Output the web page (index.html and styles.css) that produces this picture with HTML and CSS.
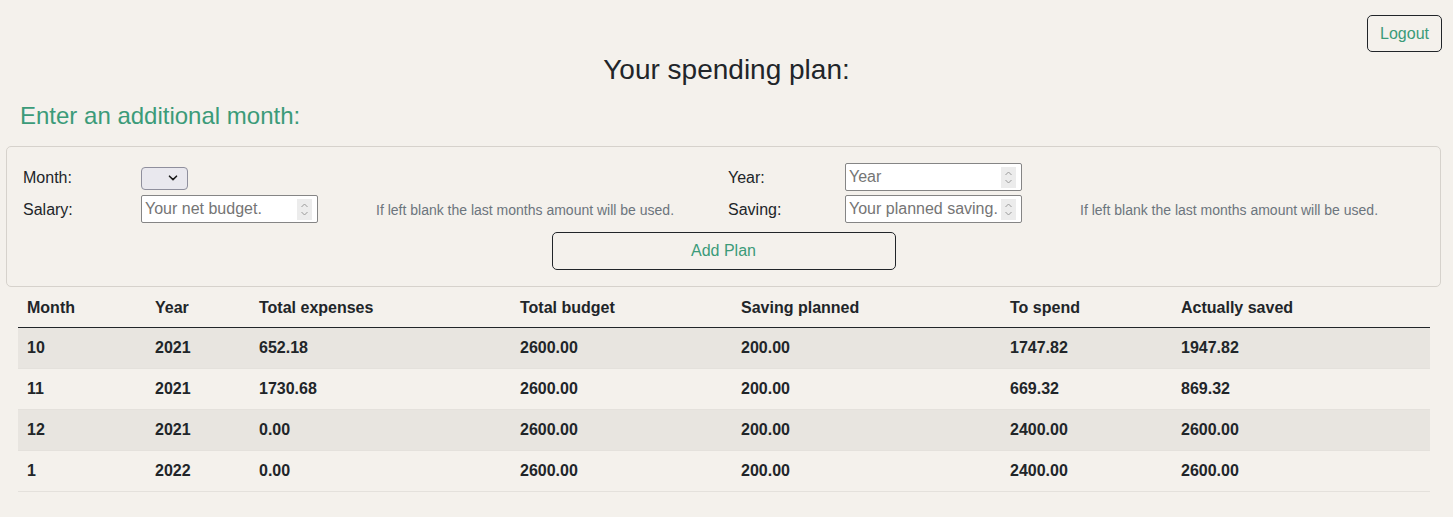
FILE: index.html
```html
<!DOCTYPE html>
<html lang="en">
<head>
<meta charset="utf-8">
<title>Spending plan</title>
<link rel="stylesheet" href="styles.css">
</head>
<body>
<div class="topbar">
  <button class="btn btn-logout">Logout</button>
</div>
<h1 class="page-title">Your spending plan:</h1>
<h2 class="section-title">Enter an additional month:</h2>
<form class="plan-form">
  <div class="form-grid">
    <label class="lbl">Month:</label>
    <div class="cell"><div class="select-box"><select class="sel"></select><svg width="10" height="6" viewBox="0 0 10 6"><path d="M1.5 1.2 L5 4.6 L8.5 1.2" fill="none" stroke="#1a1a1a" stroke-width="1.6" stroke-linecap="round" stroke-linejoin="round"/></svg></div></div>
    <div></div>
    <label class="lbl">Year:</label>
    <div class="cell"><div class="num"><input class="num-in" type="text" placeholder="Year"><svg class="spin" width="15" height="21" viewBox="0 0 15 21"><rect width="15" height="21" fill="#ececec"/><path d="M4.5 8 L7.5 5 L10.5 8" fill="none" stroke="#9a9a9a" stroke-width="1"/><path d="M4.5 13 L7.5 16 L10.5 13" fill="none" stroke="#9a9a9a" stroke-width="1"/></svg></div></div>
    <div></div>

    <label class="lbl">Salary:</label>
    <div class="cell"><div class="num"><input class="num-in" type="text" placeholder="Your net budget."><svg class="spin" width="15" height="21" viewBox="0 0 15 21"><rect width="15" height="21" fill="#ececec"/><path d="M4.5 8 L7.5 5 L10.5 8" fill="none" stroke="#9a9a9a" stroke-width="1"/><path d="M4.5 13 L7.5 16 L10.5 13" fill="none" stroke="#9a9a9a" stroke-width="1"/></svg></div></div>
    <div class="hint">If left blank the last months amount will be used.</div>
    <label class="lbl">Saving:</label>
    <div class="cell"><div class="num"><input class="num-in" type="text" placeholder="Your planned saving."><svg class="spin" width="15" height="21" viewBox="0 0 15 21"><rect width="15" height="21" fill="#ececec"/><path d="M4.5 8 L7.5 5 L10.5 8" fill="none" stroke="#9a9a9a" stroke-width="1"/><path d="M4.5 13 L7.5 16 L10.5 13" fill="none" stroke="#9a9a9a" stroke-width="1"/></svg></div></div>
    <div class="hint">If left blank the last months amount will be used.</div>
  </div>
  <div class="btn-row">
    <button type="button" class="btn btn-add">Add Plan</button>
  </div>
</form>
<table class="plan-table">
  <colgroup>
    <col class="c1"><col class="c2"><col class="c3"><col class="c4"><col class="c5"><col class="c6"><col class="c7">
  </colgroup>
  <thead>
    <tr><th>Month</th><th>Year</th><th>Total expenses</th><th>Total budget</th><th>Saving planned</th><th>To spend</th><th>Actually saved</th></tr>
  </thead>
  <tbody>
    <tr><td>10</td><td>2021</td><td>652.18</td><td>2600.00</td><td>200.00</td><td>1747.82</td><td>1947.82</td></tr>
    <tr><td>11</td><td>2021</td><td>1730.68</td><td>2600.00</td><td>200.00</td><td>669.32</td><td>869.32</td></tr>
    <tr><td>12</td><td>2021</td><td>0.00</td><td>2600.00</td><td>200.00</td><td>2400.00</td><td>2600.00</td></tr>
    <tr><td>1</td><td>2022</td><td>0.00</td><td>2600.00</td><td>200.00</td><td>2400.00</td><td>2600.00</td></tr>
  </tbody>
</table>
</body>
</html>
```

FILE: styles.css
```css
* { box-sizing: border-box; }
html, body { margin: 0; padding: 0; }
body {
  background: #f4f1ec;
  font-family: "Liberation Sans", Arial, sans-serif;
  font-size: 16px;
  line-height: 1.5;
  color: #212529;
  width: 1453px;
  min-height: 517px;
}
.topbar {
  display: flex;
  justify-content: flex-end;
  padding: 15px 11px 0 0;
}
.btn {
  font-family: "Liberation Sans", Arial, sans-serif;
  font-size: 16px;
  line-height: 24px;
  color: #3b9b79;
  background: transparent;
  border: 1px solid #212529;
  border-radius: 5px;
  cursor: pointer;
}
.btn-logout {
  height: 37px;
  padding: 5px 12px;
}
.page-title {
  margin: 1px 0 0 0;
  font-size: 28px;
  font-weight: 400;
  line-height: 34px;
  text-align: center;
  color: #212529;
}
.section-title {
  margin: 14px 0 0 20px;
  font-size: 24px;
  font-weight: 400;
  line-height: 29px;
  color: #3b9b79;
}
.plan-form {
  margin: 16px 12px 0 6px;
  border: 1px solid #d6d2cc;
  border-radius: 5px;
  padding: 16px 16px 16px 16px;
}
.form-grid {
  display: grid;
  grid-template-columns: 118px 177px 410px 117px 177px 1fr;
  grid-template-rows: 28px 28px;
  row-gap: 4px;
  align-items: center;
}
.lbl {
  font-size: 16px;
  line-height: 24px;
  padding-top: 2px;
  color: #212529;
}
.cell { display: flex; align-items: center; }
.select-box {
  width: 47px;
  height: 23px;
  margin-top: 2px;
  background: #e9e8ee;
  border: 1px solid #8f8f9d;
  border-radius: 4px;
  display: flex;
  align-items: center;
  justify-content: flex-end;
  padding-right: 9px;
}
.sel {
  appearance: none;
  -webkit-appearance: none;
  border: none;
  background: transparent;
  width: 20px;
  height: 20px;
  outline: none;
}
.num {
  width: 177px;
  height: 28px;
  background: #ffffff;
  border: 1px solid #858585;
  border-radius: 2px;
  display: flex;
  align-items: center;
  padding: 0 5px 0 3px;
}
.num-in {
  flex: 1;
  min-width: 0;
  border: none;
  outline: none;
  background: transparent;
  padding: 0;
  font-family: "Liberation Sans", Arial, sans-serif;
  font-size: 16px;
  color: #212529;
}
.num-in::placeholder { color: #757575; opacity: 1; }
.spin { flex: none; display: block; }
.hint {
  padding-left: 58px;
  font-size: 14px;
  color: #6c757d;
  padding-top: 3px;
}
.btn-row {
  display: flex;
  justify-content: center;
  margin-top: 9px;
}
.btn-add {
  width: 344px;
  height: 38px;
  padding: 6px 12px;
}
.plan-table {
  margin: 1px 0 0 18px;
  width: 1412px;
  border-collapse: collapse;
  table-layout: fixed;
}
.c1 { width: 128px; }
.c2 { width: 104px; }
.c3 { width: 261px; }
.c4 { width: 221px; }
.c5 { width: 269px; }
.c6 { width: 171px; }
.c7 { width: 258px; }
.plan-table th, .plan-table td {
  text-align: left;
  font-weight: 700;
  padding: 8px 9px;
  line-height: 24px;
  color: #212529;
}
.plan-table thead th {
  padding-bottom: 7px;
  border-bottom: 1px solid #212529;
}
.plan-table tbody td {
  border-bottom: 1px solid #e4e1dc;
}
.plan-table tbody tr:nth-child(odd) td {
  background: #e8e5e0;
}
```
